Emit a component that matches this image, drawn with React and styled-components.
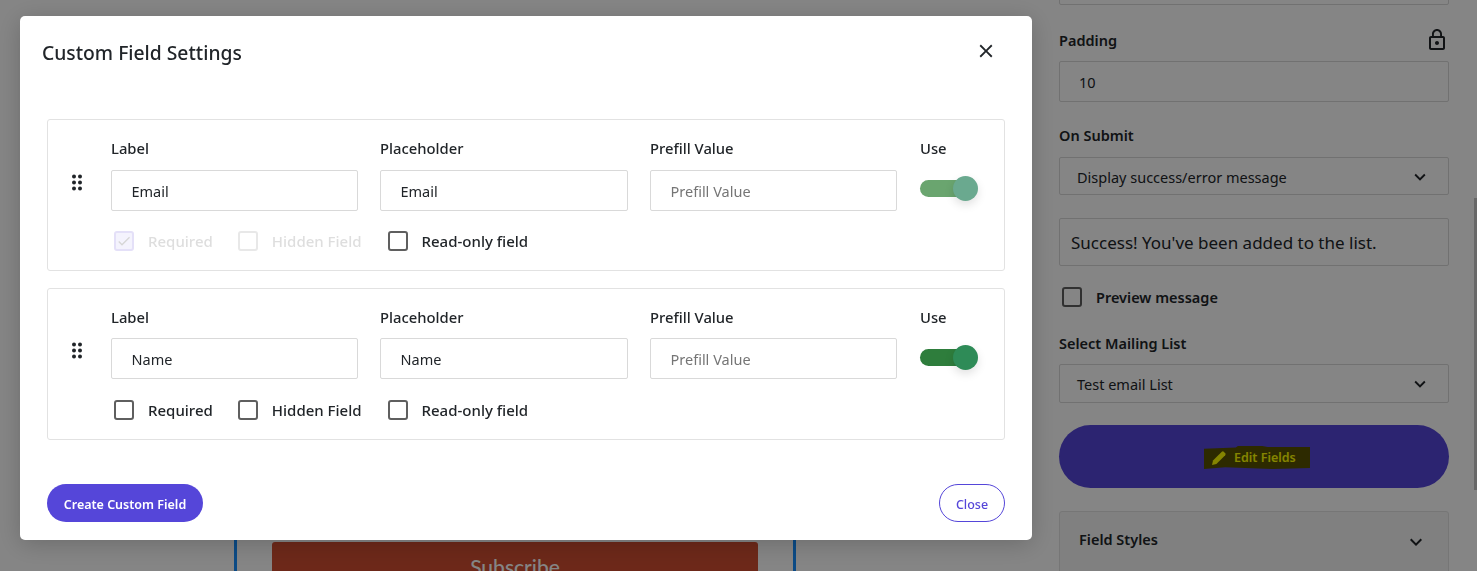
import React from "react";
import styled, { createGlobalStyle } from "styled-components";
import { MdLockOutline, MdKeyboardArrowDown, MdClose, MdCheck } from "react-icons/md";

const font = `"Noto Sans", "Open Sans", sans-serif`;

const Global = createGlobalStyle`
  html, body { margin: 0; padding: 0; height: 100%; overflow: hidden; background: #fff; }
  body { font-family: ${font}; color: #212529; }
  * { box-sizing: border-box; }
`;

const Page = styled.div`
  display: flex;
  align-items: flex-start;
  width: 1477px;
  height: 571px;
  overflow: hidden;
  background: #fff;
`;
const PreviewArea = styled.main`
  flex: 0 0 1059px;
  padding: 100px 0 0 234px;
`;
const PreviewFrame = styled.div`
  width: 562px;
  height: 540px;
  padding: 442px 35px 0;
  border-left: 3px solid #168fff;
  border-right: 3px solid #168fff;
`;
const SubscribeButton = styled.button`
  display: block;
  width: 100%;
  height: 50px;
  border: 0;
  border-radius: 3px;
  background: #d14e31;
  color: #fff;
  font: 500 21px/46px "Lato", ${font};
`;
const Sidebar = styled.aside`
  width: 390px;
  margin-top: -36px;
  display: flex;
  flex-direction: column;
  & > * { flex: none; }
`;
const FieldLabel = styled.div`
  display: flex;
  justify-content: space-between;
  align-items: center;
  height: 22px;
  font-size: 14.5px;
  font-weight: 600;
  line-height: 22px;
  color: #212529;
  margin-top: ${p => p.$top}px;
  margin-bottom: ${p => p.$bottom}px;
  svg { font-size: 24px; }
`;
const SideInput = styled.div`
  height: ${p => p.$h}px;
  border: 1px solid #d9d9d9;
  border-radius: 2px;
  margin-top: ${p => p.$top || 0}px;
  padding: ${p => p.$nudge || 0}px 17px 0 ${p => p.$pad}px;
  display: flex;
  align-items: center;
  justify-content: space-between;
  font-size: ${p => p.$size || 14.5}px;
  color: #212529;
  svg { font-size: 22px; }
`;
const PreviewCheck = styled.label`
  display: flex;
  align-items: center;
  gap: 14px;
  margin: 21px 0 0 3px;
  font-size: 14.5px;
  font-weight: 600;
  height: 20px;
`;
const EditButton = styled.button`
  height: 63px;
  margin-top: 22px;
  border: 0;
  border-radius: 32px;
  background: #5546d9;
  display: flex;
  align-items: center;
  justify-content: center;
  padding: 2px 0 0 6px;
  font-family: ${font};
`;
const Highlight = styled.span`
  display: inline-flex;
  align-items: center;
  width: 106px;
  height: 23px;
  padding: 0 0 0 7px;
  gap: 7px;
  background: #575100;
  color: #ffff00;
  font-size: 12.5px;
  font-weight: 600;
  clip-path: polygon(0 12%, 30% 6%, 32% 0, 55% 0, 60% 4%, 100% 4%, 100% 96%, 65% 100%, 20% 92%, 0 100%);
  svg { width: 16px; height: 16px; flex: none; }
`;
const AccordionHead = styled.div`
  height: 80px;
  margin-top: 23px;
  border: 1px solid #e2e2e2;
  border-radius: 3px;
  background: #f6f6f6;
  padding: 17px 20px 0 19px;
  display: flex;
  justify-content: space-between;
  align-items: flex-start;
  font-size: 14.5px;
  font-weight: 600;
  svg { font-size: 24px; margin-top: 1px; }
`;

const Backdrop = styled.div`
  position: fixed;
  inset: 0;
  background: rgba(0, 0, 0, 0.48);
`;
const Scrollbar = styled.div`
  position: fixed;
  right: 0;
  top: 198px;
  width: 3px;
  height: 292px;
  background: rgba(90, 90, 90, 0.7);
`;
const Dialog = styled.div`
  position: fixed;
  left: 20px;
  top: 16px;
  width: 1012px;
  height: 524px;
  background: #fff;
  border-radius: 5px;
  box-shadow: 0 4px 24px rgba(0, 0, 0, 0.2);
  padding: 0 27px;
  display: flex;
  flex-direction: column;
`;
const DialogHeader = styled.header`
  height: 103px;
  margin: 0 0 0 -5px;
  padding-top: 22px;
  display: flex;
  justify-content: space-between;
  align-items: flex-start;
`;
const Title = styled.h2`
  margin: 0;
  font-size: 19.3px;
  line-height: 29px;
  font-weight: 500;
  color: #212529;
`;
const CloseIcon = styled.button`
  border: 0;
  background: none;
  padding: 0;
  margin: 2px 8px 0 0;
  display: flex;
  color: #212529;
  font-size: 22px;
`;
const Cards = styled.div`
  display: flex;
  flex-direction: column;
  gap: 17.5px;
`;
const Card = styled.section`
  height: 151.5px;
  border: 1px solid #e2e2e2;
  border-radius: 3px;
  padding: 17px 27px 0 17px;
  display: grid;
  grid-template-columns: 24px 247px 248px 247px 1fr;
  column-gap: 22px;
  grid-template-rows: auto auto;
  align-content: start;
  & > :first-child { margin-right: -22px; }
`;
const Handle = styled.svg`
  width: 24px;
  height: 24px;
  margin-top: ${p => (p.$raised ? 32.5 : 33.5)}px;
  color: #212529;
`;
const Column = styled.div`
  display: flex;
  flex-direction: column;
  padding-left: ${p => p.$inset || 0}px;
`;
const ColLabel = styled.div`
  font-size: 14.8px;
  font-weight: 500;
  line-height: 22px;
  margin-bottom: 11px;
  color: #212529;
`;
const TextBox = styled.div`
  height: 41px;
  margin: ${p => (p.$raised ? "-1px 0 1px" : "0")};
  border: 1px solid #d9d9d9;
  border-radius: 2px;
  padding-left: 19.5px;
  display: flex;
  align-items: center;
  font-size: 14.5px;
  color: ${p => (p.$placeholder ? "#757575" : "#212529")};
`;
const ToggleTrack = styled.div`
  position: relative;
  width: 50px;
  height: 17px;
  margin-top: 10px;
  border-radius: 9px;
  background: ${p => (p.$muted ? "#6aa56f" : "#2e7d3c")};
`;
const ToggleThumb = styled.div`
  position: absolute;
  right: -8px;
  top: -4px;
  width: 25px;
  height: 25px;
  border-radius: 50%;
  background: ${p => (p.$muted ? "#6aa98f" : "#2e8b57")};
  box-shadow: 0 4px 10px rgba(0, 0, 0, 0.12);
`;
const CheckRow = styled.div`
  grid-column: 2 / -1;
  margin-top: 20px;
  display: flex;
  align-items: center;
`;
const Check = styled.label`
  display: flex;
  align-items: center;
  gap: 14px;
  margin-left: ${p => p.$left}px;
  font-size: 15px;
  font-weight: 500;
  color: ${p => (p.$disabled ? "#dedede" : "#212529")};
`;
const Box = styled.span`
  width: 20px;
  height: 20px;
  flex: none;
  border: 2px solid ${p => (p.$disabled ? (p.$checked ? "#e4e0f8" : "#e8e8e8") : "#5f5f5f")};
  border-radius: 3px;
  background: ${p => (p.$checked ? "#f4f3fd" : "#fff")};
  display: flex;
  align-items: center;
  justify-content: center;
  color: #d6d6d6;
  font-size: 16px;
`;
const Footer = styled.footer`
  margin-top: 44px;
  display: flex;
  justify-content: space-between;
`;
const PrimaryButton = styled.button`
  height: 38px;
  width: 156px;
  border: 0;
  border-radius: 19px;
  padding: 4px 0 0;
  background: #5546d9;
  color: #fff;
  font: 600 12.5px ${font};
`;
const OutlineButton = styled.button`
  height: 38px;
  width: 66px;
  border: 1px solid #5546d9;
  border-radius: 19px;
  padding: 4px 0 0;
  background: #fff;
  color: #5546d9;
  font: 500 12.5px ${font};
`;

const DragDots = ({ raised }) => (
  <Handle $raised={raised} viewBox="0 0 24 24" fill="currentColor">
    {[5.5, 11.5, 17.5].map(y => [9, 15].map(x => <circle key={`${x}-${y}`} cx={x} cy={y} r="2" />))}
  </Handle>
);

const Pencil = () => (
  <svg viewBox="0 0 16 16" fill="currentColor">
    <path d="M1 15 L2 10.6 L10.8 1.8 Q11.8 0.9 12.8 1.8 L14.2 3.2 Q15.1 4.2 14.2 5.2 L5.4 14 Z" />
  </svg>
);

const FieldCard = ({ name, locked }) => (
  <Card>
    <DragDots raised={!locked} />
    <Column>
      <ColLabel>Label</ColLabel>
      <TextBox $raised={!locked}>{name}</TextBox>
    </Column>
    <Column>
      <ColLabel>Placeholder</ColLabel>
      <TextBox $raised={!locked}>{name}</TextBox>
    </Column>
    <Column>
      <ColLabel>Prefill Value</ColLabel>
      <TextBox $raised={!locked} $placeholder>Prefill Value</TextBox>
    </Column>
    <Column $inset={1}>
      <ColLabel>Use</ColLabel>
      <ToggleTrack $muted={locked}>
        <ToggleThumb $muted={locked} />
      </ToggleTrack>
    </Column>
    <CheckRow>
      <Check $left={3} $disabled={locked}>
        <Box $disabled={locked} $checked={locked}>{locked && <MdCheck />}</Box>Required
      </Check>
      <Check $left={25} $disabled={locked}>
        <Box $disabled={locked} />Hidden Field
      </Check>
      <Check $left={26}>
        <Box />Read-only field
      </Check>
    </CheckRow>
  </Card>
);

export default function App() {
  return (
    <>
      <Global />
      <Page>
        <PreviewArea>
          <PreviewFrame>
            <SubscribeButton>Subscribe</SubscribeButton>
          </PreviewFrame>
        </PreviewArea>
        <Sidebar>
          <SideInput $h={41} />
          <FieldLabel $top={24} $bottom={10}>Padding <MdLockOutline /></FieldLabel>
          <SideInput $h={41} $pad={19}>10</SideInput>
          <FieldLabel $top={22} $bottom={11}>On Submit</FieldLabel>
          <SideInput $h={38} $pad={17} $nudge={1}>Display success/error message <MdKeyboardArrowDown /></SideInput>
          <SideInput $h={48} $pad={11} $top={23} $size={17}>Success! You've been added to the list.</SideInput>
          <PreviewCheck><Box />Preview message</PreviewCheck>
          <FieldLabel $top={25} $bottom={10}>Select Mailing List</FieldLabel>
          <SideInput $h={39} $pad={17}>Test email List <MdKeyboardArrowDown /></SideInput>
          <EditButton><Highlight><Pencil />Edit Fields</Highlight></EditButton>
          <AccordionHead>Field Styles <MdKeyboardArrowDown /></AccordionHead>
        </Sidebar>
      </Page>
      <Backdrop />
      <Scrollbar />
      <Dialog>
        <DialogHeader>
          <Title>Custom Field Settings</Title>
          <CloseIcon aria-label="Close"><MdClose /></CloseIcon>
        </DialogHeader>
        <Cards>
          <FieldCard name="Email" locked />
          <FieldCard name="Name" />
        </Cards>
        <Footer>
          <PrimaryButton>Create Custom Field</PrimaryButton>
          <OutlineButton>Close</OutlineButton>
        </Footer>
      </Dialog>
    </>
  );
}
